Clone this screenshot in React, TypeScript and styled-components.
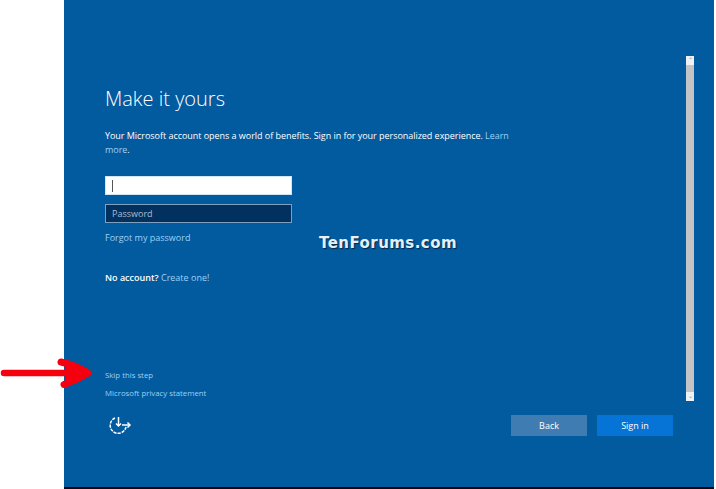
import styled, { createGlobalStyle } from 'styled-components';

const GlobalStyle = createGlobalStyle`
  html, body {
    margin: 0;
    padding: 0;
    background: #fff;
  }
  * {
    box-sizing: border-box;
  }
`;

const Page = styled.div`
  position: relative;
  display: flex;
  width: 716px;
  height: 489px;
  padding: 0 2px 0 64px;
  overflow: hidden;
  font-family: "Open Sans", "Liberation Sans", sans-serif;
`;

const Panel = styled.main`
  flex: 1;
  display: flex;
  flex-direction: column;
  background: #025a9f;
  border-bottom: 2px solid #05070c;
`;

const Body = styled.div`
  flex: 1;
  display: flex;
  justify-content: space-between;
  padding: 56px 20px 0 41px;
`;

const Content = styled.div`
  width: 410px;
  display: flex;
  flex-direction: column;
  align-items: flex-start;
`;

const Title = styled.h1`
  margin: 28px 0 0;
  font-size: 20px;
  line-height: 30px;
  font-weight: 300;
  color: #fff;
`;

const Intro = styled.p`
  margin: 15px 0 0;
  font-size: 9px;
  line-height: 14px;
  font-weight: 400;
  letter-spacing: -0.04px;
  color: #fff;
`;

const Link = styled.a`
  color: #9bd2f7;
`;

const Field = styled.div<{ $filled?: boolean }>`
  width: 187px;
  height: 19px;
  margin-top: ${(p) => (p.$filled ? '19px' : '9px')};
  padding-left: 6px;
  display: flex;
  align-items: center;
  font-size: 9px;
  background: ${(p) => (p.$filled ? '#fff' : '#03315f')};
  border: 1px solid ${(p) => (p.$filled ? '#cfe6f8' : '#7f9fbf')};
  color: #a9bdd1;
`;

const Caret = styled.span`
  width: 1px;
  height: 12px;
  background: #555;
`;

const SmallLink = styled(Link)<{ $top: number }>`
  display: block;
  margin-top: ${(p) => p.$top}px;
  font-size: 9px;
  line-height: 14px;
`;

const AccountLine = styled.p`
  margin: 26px 0 0;
  font-size: 9px;
  line-height: 14px;
  font-weight: 600;
  color: #fff;
`;

const AccountLink = styled(Link)`
  font-weight: 400;
`;

const TinyLink = styled(Link)<{ $top: number }>`
  display: block;
  margin-top: ${(p) => p.$top}px;
  font-size: 7.8px;
  line-height: 12px;
`;

const Scrollbar = styled.div`
  width: 8px;
  height: 345px;
  display: flex;
  flex-direction: column;
  justify-content: space-between;
  background: #c4c4c6;
`;

const ScrollCap = styled.div`
  height: 9px;
  background: #eef2f6;
  color: #7f8a96;
  font-size: 6px;
  line-height: 9px;
  text-align: center;
`;

const Footer = styled.footer`
  height: 72px;
  padding: 0 41px 0 44px;
  display: flex;
  align-items: flex-start;
  justify-content: space-between;
`;

const AccessIcon = styled.svg`
  width: 24px;
  height: 22px;
`;

const Buttons = styled.div`
  display: flex;
  gap: 10px;
`;

const Button = styled.button<{ $primary?: boolean }>`
  width: 76px;
  height: 21px;
  padding: 0;
  border: none;
  font-family: inherit;
  font-size: 9px;
  color: #fff;
  background: ${(p) => (p.$primary ? '#0674d6' : '#3e7cb1')};
`;

const Watermark = styled.div`
  position: absolute;
  left: 319px;
  top: 234px;
  font-family: "DejaVu Sans", sans-serif;
  font-size: 15px;
  line-height: 18px;
  font-weight: 700;
  letter-spacing: 0.45px;
  color: #e4f0f8;
  text-shadow: 1px 1px 1px #03284a;
`;

const Arrow = styled.svg`
  position: absolute;
  left: 0;
  top: 355px;
  width: 92px;
  height: 36px;
`;

export default function App() {
  return (
    <>
      <GlobalStyle />
      <Page>
        <Panel>
          <Body>
            <Content>
              <Title>Make it yours</Title>
              <Intro>
                Your Microsoft account opens a world of benefits. Sign in for your personalized experience.{' '}
                <Link>Learn more</Link>.
              </Intro>
              <Field $filled>
                <Caret />
              </Field>
              <Field>Password</Field>
              <SmallLink $top={8}>Forgot my password</SmallLink>
              <AccountLine>
                No account? <AccountLink>Create one!</AccountLink>
              </AccountLine>
              <TinyLink $top={84}>Skip this step</TinyLink>
              <TinyLink $top={6}>Microsoft privacy statement</TinyLink>
            </Content>
            <Scrollbar>
              <ScrollCap>⌃</ScrollCap>
              <ScrollCap>⌄</ScrollCap>
            </Scrollbar>
          </Body>
          <Footer>
            <AccessIcon viewBox="0 0 24 22" fill="none" stroke="#fff" strokeWidth="1.5">
              <path d="M7 3 A8 8 0 1 0 18 12" strokeDasharray="3.2 1" />
              <path d="M10.5 2 V11" />
              <path d="M8 8.5 L10.5 11 L13 8.5" />
              <path d="M14 10 H22" />
              <path d="M19.5 7.5 L22 10 L19.5 12.5" />
            </AccessIcon>
            <Buttons>
              <Button>Back</Button>
              <Button $primary>Sign in</Button>
            </Buttons>
          </Footer>
        </Panel>
        <Watermark>TenForums.com</Watermark>
        <Arrow viewBox="0 0 92 36" fill="none" stroke="#f5000f" strokeLinecap="round" strokeLinejoin="round">
          <path d="M4 18 H76" strokeWidth="6.5" />
          <path d="M61 7 C70 9 80 13 88 18 C80 23 71 27 64 29.5" strokeWidth="7" />
          <path d="M68 11 L84 18 L68 25 Z" fill="#f5000f" strokeWidth="4" />
        </Arrow>
      </Page>
    </>
  );
}
